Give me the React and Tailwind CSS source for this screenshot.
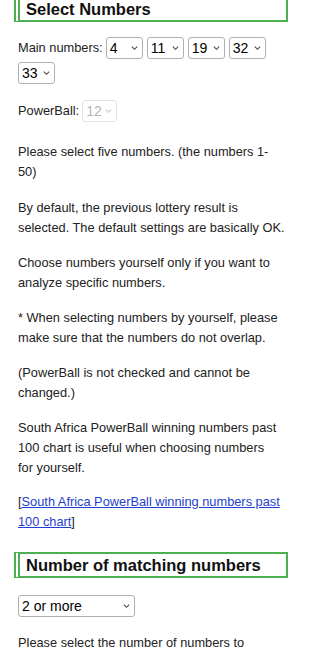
import React from "react";

const Chevron = ({ disabled }) => (
  <svg
    viewBox="0 0 8 5"
    className={"pointer-events-none absolute right-[5px] top-1/2 -translate-y-1/2 w-[7px] h-[5px] " + (disabled ? "text-[#c8c8c8]" : "text-[#444]")}
  >
    <path d="M1 1 L4 4 L7 1" fill="none" stroke="currentColor" strokeWidth="1.2" />
  </svg>
);

const NumSelect = ({ value, options, width = "w-[37px]", disabled = false }) => (
  <span className={"relative inline-flex h-[22px] " + width}>
    <select
      defaultValue={value}
      disabled={disabled}
      className={
        "appearance-none w-full h-full rounded-[3px] border pl-[3px] pr-[12px] text-[14px] font-['Liberation_Sans',Arial,sans-serif] bg-white " +
        (disabled ? "border-[#e3e3e3] text-[#b5b5b5]" : "border-[#b0b0b0] text-black")
      }
    >
      {options.map((o) => (
        <option key={o} value={o}>
          {o}
        </option>
      ))}
    </select>
    <Chevron disabled={disabled} />
  </span>
);

const Heading = ({ children, className = "" }) => (
  <h2
    className={
      "border-2 border-[#4caf50] border-l-[6px] border-l-[#4caf50] [border-left-style:double] pl-[6px] text-[16.5px] leading-[22px] font-bold text-[#111] " +
      className
    }
  >
    {children}
  </h2>
);

// paragraph whose lines break where the original page breaks them
const Lines = ({ lines, className = "" }) => (
  <p className={className}>
    {lines.map((l, i) => (
      <span key={i} className="block whitespace-nowrap">
        {l}
      </span>
    ))}
  </p>
);

const range = (a, b) => Array.from({ length: b - a + 1 }, (_, i) => String(a + i));

export default function App() {
  const mains = ["4", "11", "19", "32", "33"];
  const nums = range(1, 50);

  return (
    <div className="w-[300px] overflow-hidden bg-white pl-[14px] pr-[12px] pb-6 text-[12.8px] leading-5 text-[#222] font-['Liberation_Sans',Arial,sans-serif]">
      <Heading className="mt-[-4px]">Select Numbers</Heading>

      <div className="pl-1 pr-[5px]">
        <div className="mt-[15px] flex flex-wrap items-center gap-x-[4px] gap-y-[3px]">
          <span className="mr-[-1px]">Main numbers:</span>
          {mains.map((m, i) => (
            <NumSelect key={i} value={m} options={nums} />
          ))}
        </div>

        <div className="mt-[16px] flex items-center gap-[3px]">
          <span>PowerBall:</span>
          <NumSelect value="12" options={range(1, 20)} width="w-[35px]" disabled />
        </div>

        <Lines className="mt-[20px]" lines={["Please select five numbers. (the numbers 1-", "50)"]} />
        <Lines
          className="mt-[16px]"
          lines={["By default, the previous lottery result is", "selected. The default settings are basically OK."]}
        />
        <Lines
          className="mt-[15px]"
          lines={["Choose numbers yourself only if you want to", "analyze specific numbers."]}
        />
        <Lines
          className="mt-[15px]"
          lines={["* When selecting numbers by yourself, please", "make sure that the numbers do not overlap."]}
        />
        <Lines className="mt-[15px]" lines={["(PowerBall is not checked and cannot be", "changed.)"]} />
        <Lines
          className="mt-[15px]"
          lines={[
            "South Africa PowerBall winning numbers past",
            "100 chart is useful when choosing numbers",
            "for yourself.",
          ]}
        />
        <p className="mt-[14px]">
          <span className="block whitespace-nowrap">
            [<a href="#" className="text-[#1f3fcf] underline">South Africa PowerBall winning numbers past</a>
          </span>
          <span className="block whitespace-nowrap">
            <a href="#" className="text-[#1f3fcf] underline">100 chart</a>]
          </span>
        </p>
      </div>

      <Heading className="mt-[20px]">Number of matching numbers</Heading>

      <div className="pl-1 pr-1">
        <div className="mt-[17px]">
          <NumSelect
            value="2 or more"
            options={["1 or more", "2 or more", "3 or more", "4 or more", "5 or more"]}
            width="w-[117px]"
          />
        </div>
        <p className="mt-[16px]">Please select the number of numbers to display in the results.</p>
      </div>
    </div>
  );
}
